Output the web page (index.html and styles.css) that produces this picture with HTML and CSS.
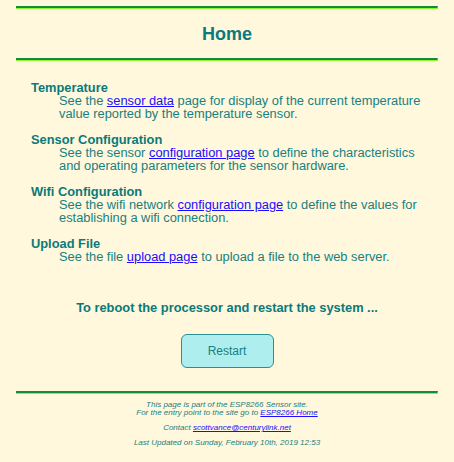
FILE: index.html
```html
<!DOCTYPE html>
<html>
<head>
<meta charset="utf-8">
<link rel="stylesheet" href="styles.css">
</head>
<body>
<div class="page">
  <hr class="rule">
  <h1 class="title">Home</h1>
  <hr class="rule">
  <dl class="menu">
    <dt>Temperature</dt>
    <dd>See the <a href="#">sensor data</a> page for display of the current temperature value reported by the temperature sensor.</dd>
    <dt>Sensor Configuration</dt>
    <dd>See the sensor <a href="#">configuration page</a> to define the characteristics and operating parameters for the sensor hardware.</dd>
    <dt>Wifi Configuration</dt>
    <dd>See the wifi network <a href="#">configuration page</a> to define the values for establishing a wifi connection.</dd>
    <dt>Upload File</dt>
    <dd>See the file <a href="#">upload page</a> to upload a file to the web server.</dd>
  </dl>
  <p class="reboot">To reboot the processor and restart the system ...</p>
  <div class="actions"><button class="btn">Restart</button></div>
  <hr class="rule">
  <footer class="foot">
    <p>This page is part of the ESP8266 Sensor site.<br>For the entry point to the site go to <a href="#">ESP8266 Home</a></p>
    <p>Contact <a href="#">scottvance@centurylink.net</a></p>
    <p>Last Updated on Sunday, February 10th, 2019 12:53</p>
  </footer>
</div>
</body>
</html>
```
FILE: styles.css
```css
html, body {
  margin: 0;
  padding: 0;
  background: #fff8dc;
}
body {
  font-family: "Liberation Sans", Arial, sans-serif;
  color: #178080;
}
.page {
  padding: 6px 16px 0;
}
.rule {
  margin: 0;
  height: 0;
  border-style: solid;
  border-width: 2px 1px 1px 0;
  border-color: #138c35 #8cf23a #8cf23a #138c35;
}
.title {
  margin: 0;
  padding: 15px 0 14px;
  text-align: center;
  font-size: 18px;
  line-height: 20px;
  font-weight: bold;
  color: #0b7a80;
}
.menu {
  margin: 20px 0 0 15px;
  font-size: 12.85px;
  line-height: 13px;
}
.menu dt {
  font-weight: bold;
  color: #0b7a7a;
}
.menu dd {
  margin: 0 12px 13px 28px;
}
a {
  color: #1a0dff;
}
.reboot {
  margin: 37px 0 0;
  text-align: center;
  font-size: 12.85px;
  line-height: 15px;
  font-weight: bold;
  color: #0b7a7a;
}
.actions {
  display: flex;
  justify-content: center;
  padding: 19px 0 23px;
}
.btn {
  width: 93px;
  height: 34px;
  background: #afeeee;
  border: 1px solid #2a9090;
  border-radius: 6px;
  color: #178080;
  font-family: "Liberation Sans", Arial, sans-serif;
  font-size: 12px;
}
.foot {
  text-align: center;
  font-style: italic;
  font-size: 8px;
  line-height: 8px;
  padding-top: 7px;
}
.foot p {
  margin: 0 0 7px;
}
```
